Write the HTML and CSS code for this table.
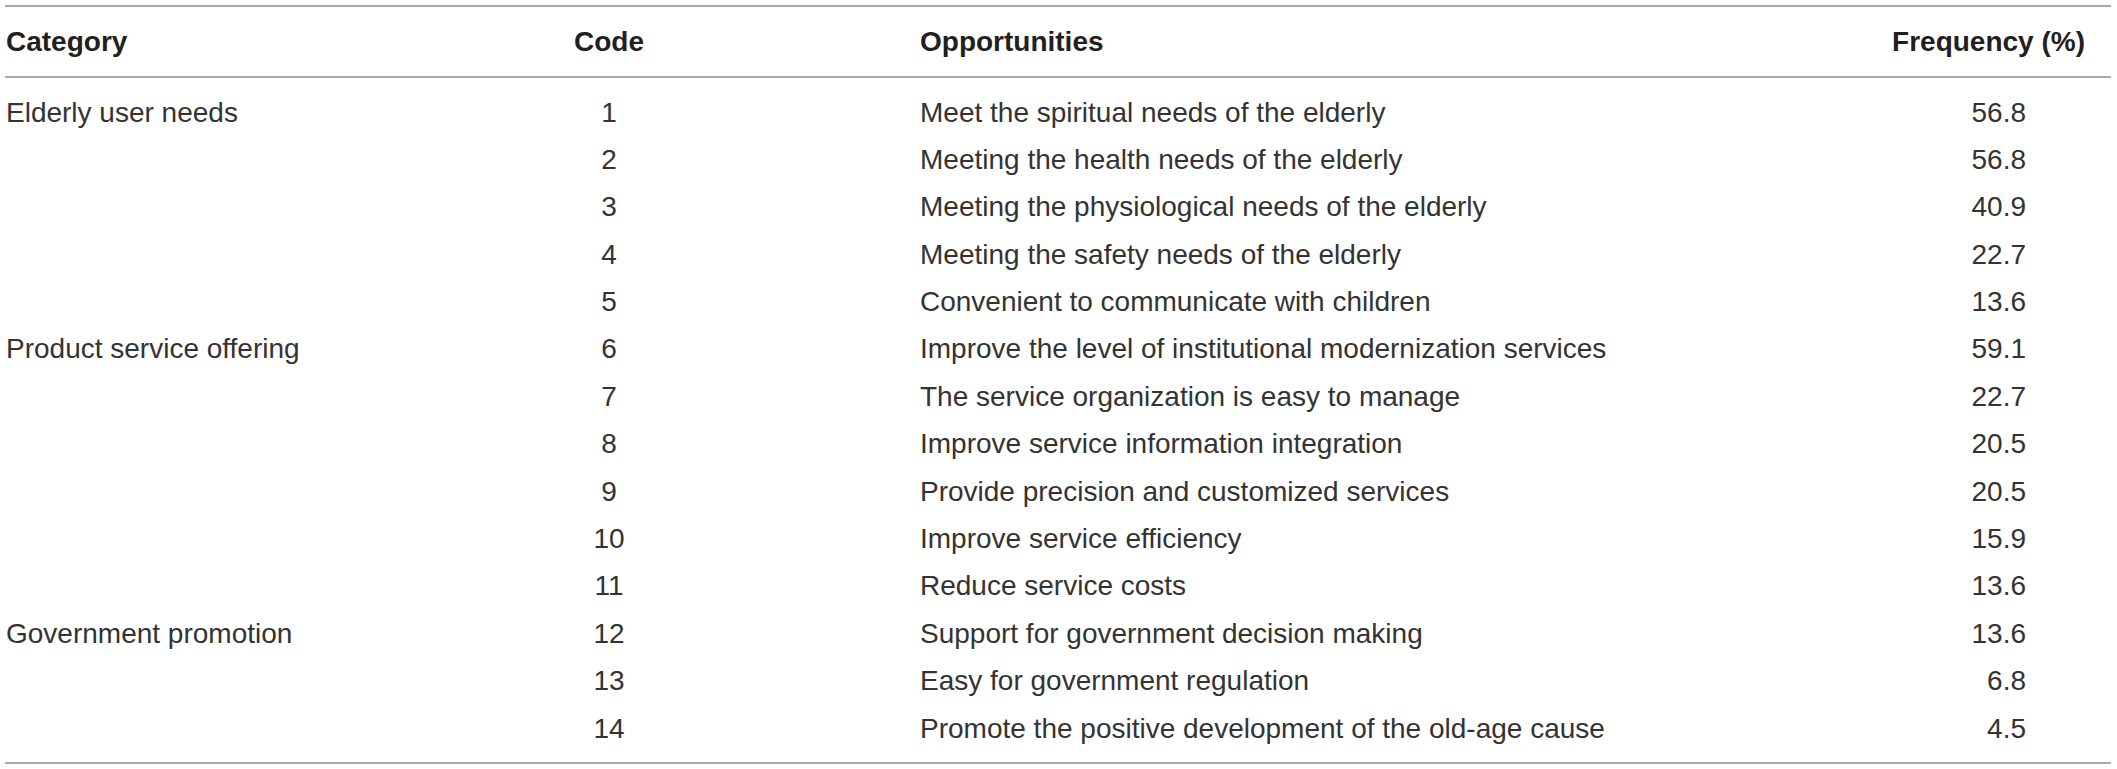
FILE: index.html
```html
<!DOCTYPE html>
<html lang="en">
<head>
<meta charset="utf-8">
<title>Opportunities</title>
<link rel="stylesheet" href="styles.css">
</head>
<body>
<div class="table">
  <div class="row head">
    <div class="cell cat">Category</div>
    <div class="cell code">Code</div>
    <div class="cell opp">Opportunities</div>
    <div class="cell freq">Frequency (%)</div>
  </div>
  <div class="body">
    <div class="row"><div class="cell cat">Elderly user needs</div><div class="cell code">1</div><div class="cell opp">Meet the spiritual needs of the elderly</div><div class="cell freq">56.8</div></div>
    <div class="row"><div class="cell cat"></div><div class="cell code">2</div><div class="cell opp">Meeting the health needs of the elderly</div><div class="cell freq">56.8</div></div>
    <div class="row"><div class="cell cat"></div><div class="cell code">3</div><div class="cell opp">Meeting the physiological needs of the elderly</div><div class="cell freq">40.9</div></div>
    <div class="row"><div class="cell cat"></div><div class="cell code">4</div><div class="cell opp">Meeting the safety needs of the elderly</div><div class="cell freq">22.7</div></div>
    <div class="row"><div class="cell cat"></div><div class="cell code">5</div><div class="cell opp">Convenient to communicate with children</div><div class="cell freq">13.6</div></div>
    <div class="row"><div class="cell cat">Product service offering</div><div class="cell code">6</div><div class="cell opp">Improve the level of institutional modernization services</div><div class="cell freq">59.1</div></div>
    <div class="row"><div class="cell cat"></div><div class="cell code">7</div><div class="cell opp">The service organization is easy to manage</div><div class="cell freq">22.7</div></div>
    <div class="row"><div class="cell cat"></div><div class="cell code">8</div><div class="cell opp">Improve service information integration</div><div class="cell freq">20.5</div></div>
    <div class="row"><div class="cell cat"></div><div class="cell code">9</div><div class="cell opp">Provide precision and customized services</div><div class="cell freq">20.5</div></div>
    <div class="row"><div class="cell cat"></div><div class="cell code">10</div><div class="cell opp">Improve service efficiency</div><div class="cell freq">15.9</div></div>
    <div class="row"><div class="cell cat"></div><div class="cell code">11</div><div class="cell opp">Reduce service costs</div><div class="cell freq">13.6</div></div>
    <div class="row"><div class="cell cat">Government promotion</div><div class="cell code">12</div><div class="cell opp">Support for government decision making</div><div class="cell freq">13.6</div></div>
    <div class="row"><div class="cell cat"></div><div class="cell code">13</div><div class="cell opp">Easy for government regulation</div><div class="cell freq">6.8</div></div>
    <div class="row"><div class="cell cat"></div><div class="cell code">14</div><div class="cell opp">Promote the positive development of the old-age cause</div><div class="cell freq">4.5</div></div>
  </div>
</div>
</body>
</html>
```

FILE: styles.css
```css
html, body {
  margin: 0;
  padding: 0;
  background: #ffffff;
}

.table {
  margin: 5px 6px 0 5px;
  border-top: 2px solid #a9a9a9;
  border-bottom: 2px solid #a9a9a9;
  font-family: "Liberation Sans", Arial, sans-serif;
  font-size: 28px;
  color: #333333;
}

.row {
  display: grid;
  grid-template-columns: 535px 138px 1fr 320px;
  align-items: center;
  height: 47.4px;
  line-height: 47.4px;
  white-space: nowrap;
}

.head {
  height: 69px;
  line-height: 69px;
  border-bottom: 2px solid #a9a9a9;
  font-weight: bold;
  color: #231f20;
}

.body {
  padding: 10.5px 0 10px;
}

.cat {
  padding-left: 1px;
}

.code {
  text-align: center;
}

.opp {
  padding-left: 242px;
}

.freq {
  text-align: right;
  padding-right: 85px;
}

.head .freq {
  padding-right: 26px;
}
```
